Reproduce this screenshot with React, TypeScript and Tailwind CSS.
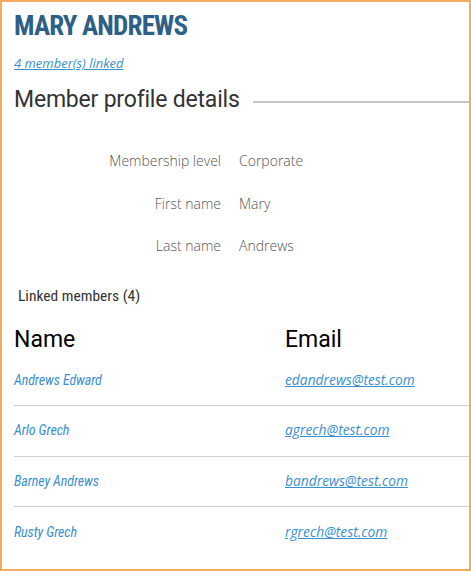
import React from 'react';

const members = [
  { name: 'Andrews Edward', email: 'edandrews@test.com' },
  { name: 'Arlo Grech', email: 'agrech@test.com' },
  { name: 'Barney Andrews', email: 'bandrews@test.com' },
  { name: 'Rusty Grech', email: 'rgrech@test.com' },
];

const details = [
  { label: 'Membership level', value: 'Corporate' },
  { label: 'First name', value: 'Mary' },
  { label: 'Last name', value: 'Andrews' },
];

export default function App() {
  return (
    <div className="w-[471px] h-[571px] border-2 border-[#f5ab5e] bg-white overflow-hidden pl-3">
      {/* Header */}
      <h1 className="font-['Roboto',sans-serif] font-bold text-[27px] [font-stretch:75%] tracking-[-0.8px] text-[#2d5f88] leading-none mt-[11px]">
        MARY ANDREWS
      </h1>
      <a className="block mt-[17px] font-['Open_Sans',sans-serif] italic text-[13px] leading-none text-[#3a8fd3] underline">
        4 member(s) linked
      </a>

      {/* Section title */}
      <div className="flex items-center mt-[18px]">
        <h2 className="font-['Roboto',sans-serif] text-[23px] leading-[24px] text-[#333] tracking-[-0.2px]">
          Member profile details
        </h2>
        <div className="flex-1 h-[2px] bg-[#c6c6c6] ml-[13px] mt-[3px]" />
      </div>

      {/* Detail rows */}
      <div className="mt-[39px] flex flex-col gap-[22.5px]">
        {details.map((d) => (
          <div key={d.label} className="flex font-['Open_Sans',sans-serif] font-light text-[14px] leading-[20px] text-[#555]">
            <span className="w-[207px] text-right">{d.label}</span>
            <span className="ml-[18px]">{d.value}</span>
          </div>
        ))}
      </div>

      {/* Linked members */}
      <div className="mt-[33px] ml-[4px] font-['Roboto',sans-serif] text-[15.5px] [font-stretch:85%] leading-none text-[#333]">
        Linked members (4)
      </div>

      <div className="mt-[23px] flex font-['Roboto',sans-serif] text-[23px] leading-[24px] text-black">
        <span className="w-[271px]">Name</span>
        <span>Email</span>
      </div>

      <div className="mt-[4px]">
        {members.map((m, i) => (
          <div
            key={m.email}
            className={`flex items-center h-[50.5px] ${i < members.length - 1 ? 'border-b border-[#cfcfcf]' : ''}`}
          >
            <span className="w-[271px] font-['Roboto',sans-serif] italic text-[14px] [font-stretch:80%] tracking-[-0.1px] text-[#3a8fd3]">
              {m.name}
            </span>
            <a className="font-['Open_Sans',sans-serif] italic text-[13.8px] text-[#3a8fd3] underline">
              {m.email}
            </a>
          </div>
        ))}
      </div>
    </div>
  );
}
